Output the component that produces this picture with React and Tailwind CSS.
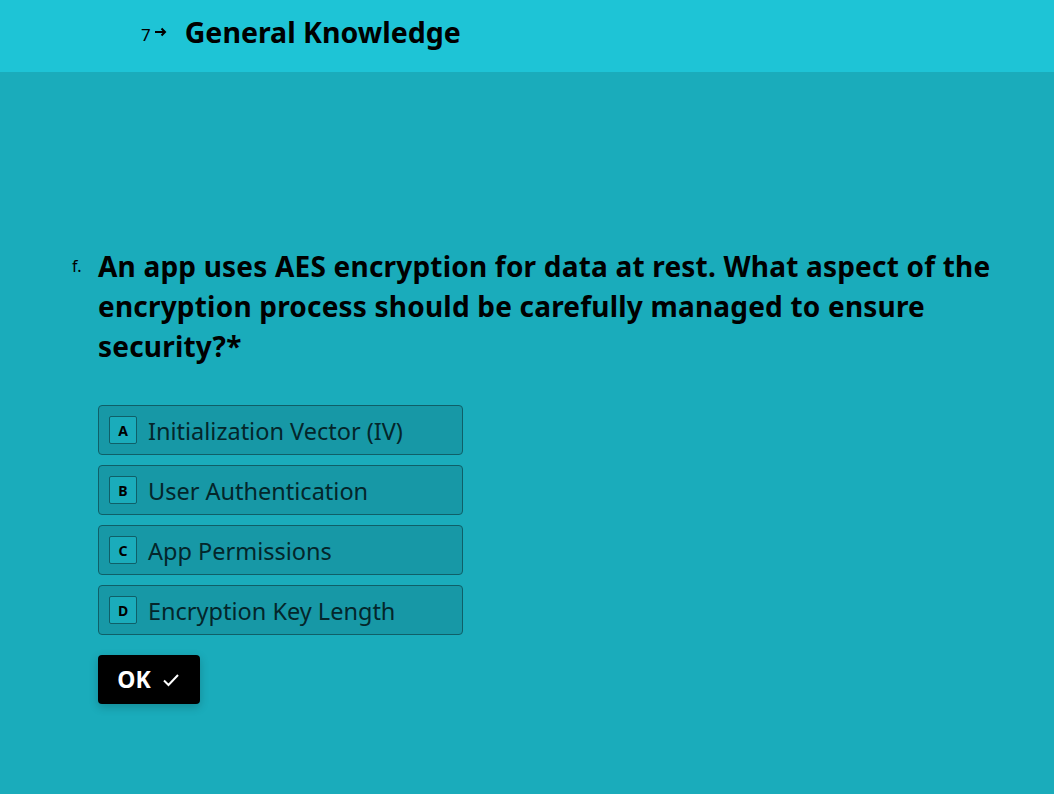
import React from 'react';

const options = [
  { key: 'A', label: 'Initialization Vector (IV)' },
  { key: 'B', label: 'User Authentication' },
  { key: 'C', label: 'App Permissions' },
  { key: 'D', label: 'Encryption Key Length' },
];

const App = () => {
  return (
    <div className="min-h-[794px] bg-[#1aacbb] text-black" style={{ fontFamily: '"Noto Sans", "Open Sans", sans-serif' }}>
      {/* Header */}
      <header className="h-[72px] bg-[#1ec4d6] flex items-center pl-[141px]">
        <span className="text-[17px] leading-none mt-[-4px]">7</span>
        <svg width="14" height="14" viewBox="0 0 14 14" className="ml-[3px] mt-[-8px]">
          <path d="M1 7h10M7.5 3.5L11 7l-3.5 3.5" stroke="black" strokeWidth="2" fill="none" />
        </svg>
        <h1 className="ml-[17px] text-[28.5px] font-bold leading-none mt-[-8px]">General Knowledge</h1>
      </header>

      {/* Question */}
      <main className="pt-[174px] pl-[72px] pr-[40px]">
        <div className="flex">
          <span className="w-[26px] shrink-0 text-[16px] leading-[40px]">f.</span>
          <h2 className="text-[28px] font-bold leading-[40px] tracking-[0.2px] max-w-[910px]">
            An app uses AES encryption for data at rest. What aspect of the encryption process should be carefully managed to ensure security?*
          </h2>
        </div>

        <div className="pl-[26px] mt-[39px] flex flex-col gap-[10px]">
          {options.map((o) => (
            <button
              key={o.key}
              className="w-[365px] h-[50px] flex items-center gap-[11px] px-[10px] rounded-[4px] border border-[#0f5f68] bg-[#1798a6] text-left"
            >
              <span className="w-[28px] h-[28px] flex items-center justify-center border border-[#0f5f68] rounded-[2px] bg-[#1aacbb] text-[14px] font-bold">
                {o.key}
              </span>
              <span className="text-[23.5px] text-[#04262b] pt-[3px]">{o.label}</span>
            </button>
          ))}

          <button className="mt-[10px] w-[102px] h-[49px] bg-black rounded-[4px] flex items-center justify-center gap-[10px] text-white shadow-[0_3px_10px_rgba(0,0,0,0.2)]">
            <span className="text-[23px] font-bold">OK</span>
            <svg width="20" height="20" viewBox="0 0 20 20">
              <path d="M3 10.5l4.5 4.5L17 5" stroke="white" strokeWidth="2" fill="none" />
            </svg>
          </button>
        </div>
      </main>
    </div>
  );
};

export default App;
